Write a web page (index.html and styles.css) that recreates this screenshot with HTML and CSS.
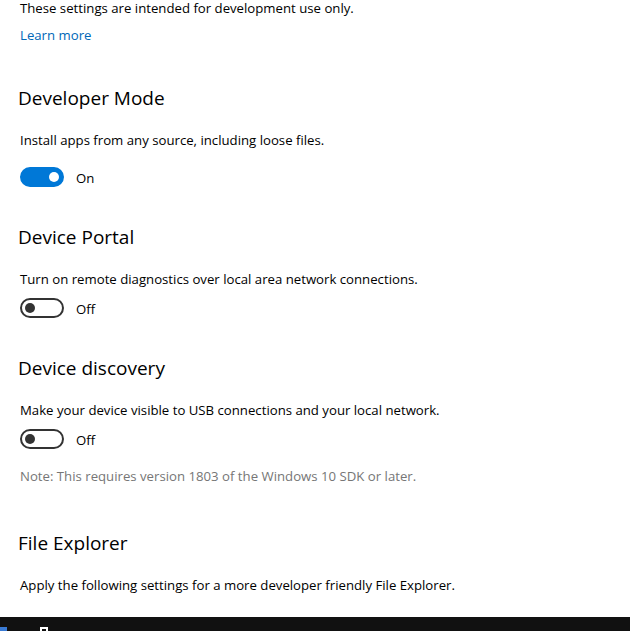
FILE: index.html
```html
<!DOCTYPE html>
<html>
<head>
<meta charset="utf-8">
<link rel="stylesheet" href="styles.css">
</head>
<body>
<div class="screen">
  <main class="content">
    <p class="text intro">These settings are intended for development use only.</p>
    <a class="link" href="#">Learn more</a>

    <h2 class="heading h-first">Developer Mode</h2>
    <p class="text desc">Install apps from any source, including loose files.</p>
    <div class="toggle-row tr-first">
      <span class="toggle on"><span class="knob"></span></span>
      <span class="state">On</span>
    </div>

    <h2 class="heading">Device Portal</h2>
    <p class="text desc">Turn on remote diagnostics over local area network connections.</p>
    <div class="toggle-row">
      <span class="toggle"><span class="knob"></span></span>
      <span class="state">Off</span>
    </div>

    <h2 class="heading">Device discovery</h2>
    <p class="text desc">Make your device visible to USB connections and your local network.</p>
    <div class="toggle-row">
      <span class="toggle"><span class="knob"></span></span>
      <span class="state">Off</span>
    </div>
    <p class="text note">Note: This requires version 1803 of the Windows 10 SDK or later.</p>

    <h2 class="heading h-last">File Explorer</h2>
    <p class="text desc">Apply the following settings for a more developer friendly File Explorer.</p>
  </main>
  <footer class="taskbar">
    <span class="start"></span>
    <span class="tb-icon"></span>
  </footer>
</div>
</body>
</html>
```
FILE: styles.css
```css
* { box-sizing: border-box; }
html, body { margin: 0; padding: 0; }
body {
  background: #fff;
  font-family: "Open Sans", "Noto Sans", sans-serif;
  color: #000;
}
.screen {
  width: 630px;
  height: 631px;
  display: flex;
  flex-direction: column;
  overflow: hidden;
}
.content {
  flex: 1;
  display: flex;
  flex-direction: column;
  align-items: flex-start;
  padding: 0 20px;
  overflow: hidden;
}
.text {
  margin: 0;
  font-size: 13.2px;
  line-height: 20px;
  color: #000;
}
.intro { margin-top: -2px; }
.link {
  margin-top: 7px;
  font-size: 13.2px;
  line-height: 20px;
  color: #0067b8;
  text-decoration: none;
}
.heading {
  margin: 36px 0 0 -2px;
  font-size: 19px;
  font-weight: 400;
  line-height: 28px;
}
.h-first { margin-top: 39px; }
.h-last { margin-top: 43px; }
.desc { margin-top: 18px; }
.toggle-row {
  margin-top: 9px;
  display: flex;
  align-items: center;
  gap: 12px;
  height: 20px;
}
.tr-first { margin-top: 17px; }
.toggle {
  width: 44px;
  height: 20px;
  border-radius: 10px;
  border: 2px solid #333;
  display: flex;
  align-items: center;
  padding: 0 3px;
}
.toggle .knob {
  width: 10px;
  height: 10px;
  border-radius: 50%;
  background: #333;
}
.toggle.on {
  background: #0078d7;
  border-color: #0078d7;
  justify-content: flex-end;
}
.toggle.on .knob { background: #fff; }
.state {
  font-size: 13.2px;
  line-height: 20px;
  padding-top: 1px;
}
.note {
  margin-top: 17px;
  color: #767676;
}
.taskbar {
  height: 14px;
  background: #111;
  position: relative;
  flex-shrink: 0;
}
.start {
  position: absolute;
  left: 0;
  bottom: 0;
  width: 7px;
  height: 4px;
  background: #3a7bd5;
}
.tb-icon {
  position: absolute;
  left: 40px;
  bottom: 0;
  width: 8px;
  height: 4px;
  border-top: 2px solid #fff;
  border-left: 2px solid #fff;
  border-right: 2px solid #fff;
}
```
